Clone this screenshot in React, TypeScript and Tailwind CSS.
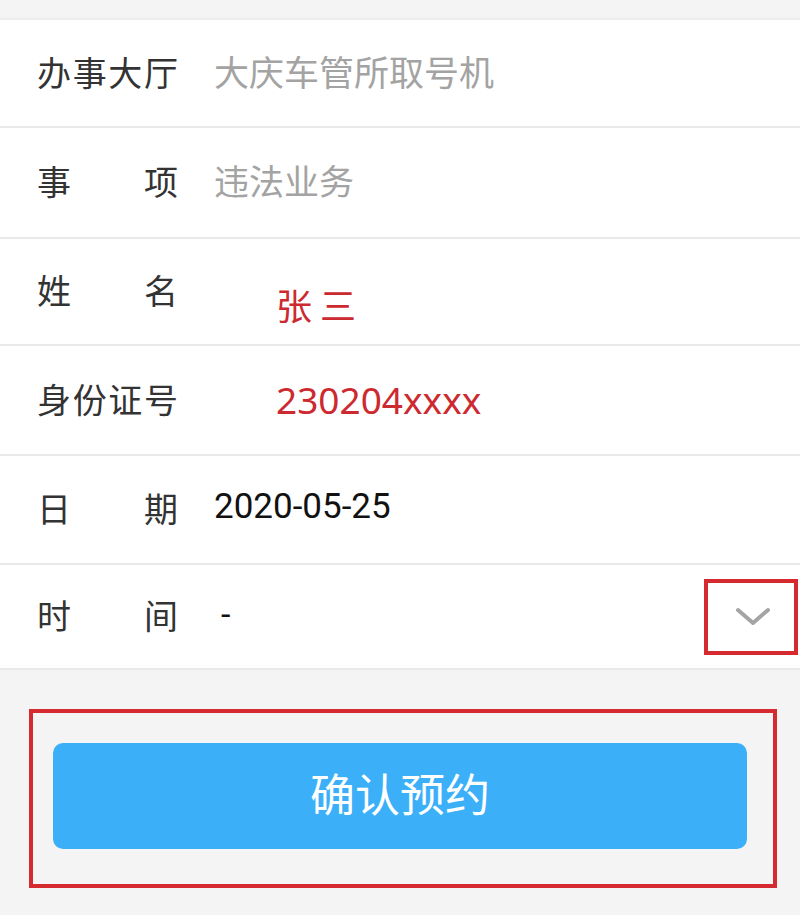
import React from 'react';

const CJK = '"Noto Sans CJK SC", "Noto Sans", sans-serif';

function Label({ chars }: { chars: string[] }) {
  return (
    <div className="flex w-[141px] shrink-0 justify-between text-[34px] text-[#333333]">
      {chars.map((c, i) => (
        <span key={i}>{c}</span>
      ))}
    </div>
  );
}

function Row({ h, children }: { h: string; children: React.ReactNode }) {
  return (
    <div className={`flex items-center border-b-2 border-[#e9e9e9] bg-white pb-[4px] pl-[37px] ${h}`}>
      {children}
    </div>
  );
}

export default function App() {
  return (
    <div className="min-h-[915px] w-[800px] bg-[#f4f4f4] pt-[18px]" style={{ fontFamily: CJK }}>
      <div className="border-t-2 border-[#ececec]">
        <Row h="h-[108px]">
          <Label chars={['办', '事', '大', '厅']} />
          <span className="ml-[36px] text-[35px] text-[#a3a3a3]">大庆车管所取号机</span>
        </Row>
        <Row h="h-[111px]">
          <Label chars={['事', '项']} />
          <span className="ml-[36px] text-[35px] text-[#a3a3a3]">违法业务</span>
        </Row>
        <Row h="h-[107px]">
          <Label chars={['姓', '名']} />
          <span className="ml-[98px] mt-7 text-[36px] text-[#cc2a30]">张&nbsp;三</span>
        </Row>
        <Row h="h-[110px]">
          <Label chars={['身', '份', '证', '号']} />
          <span
            className="ml-[98px] mt-1 text-[37px] text-[#cc2a30]"
            style={{ fontFamily: '"Noto Sans", sans-serif' }}
          >
            230204xxxx
          </span>
        </Row>
        <Row h="h-[109px]">
          <Label chars={['日', '期']} />
          <span
            className="ml-[36px] text-[35px] text-[#111111]"
            style={{ fontFamily: 'Roboto, sans-serif' }}
          >
            2020-05-25
          </span>
        </Row>
        <Row h="h-[105px]">
          <Label chars={['时', '间']} />
          <span
            className="ml-[43px] text-[34px] text-[#111111]"
            style={{ fontFamily: 'Roboto, sans-serif' }}
          >
            -
          </span>
          <div className="ml-auto mr-[2px] mt-[4px] flex h-[76px] w-[94px] items-center justify-center border-4 border-[#d42a30]">
            <svg width="36" height="22" viewBox="0 0 36 22" fill="none" className="ml-[4px]">
              <path
                d="M3 4 L18 17 L33 4"
                stroke="#a4a4a4"
                strokeWidth="4"
                strokeLinecap="round"
                strokeLinejoin="round"
              />
            </svg>
          </div>
        </Row>
      </div>

      <div className="mx-[29px] mt-[39px] h-[179px] w-[748px] border-4 border-[#d42a30] pl-[20px] pt-[30px]">
        <button className="flex h-[106px] w-[694px] items-center justify-center rounded-[10px] bg-[#3bb0f8] pb-[6px] text-[45px] text-white">
          确认预约
        </button>
      </div>
    </div>
  );
}
